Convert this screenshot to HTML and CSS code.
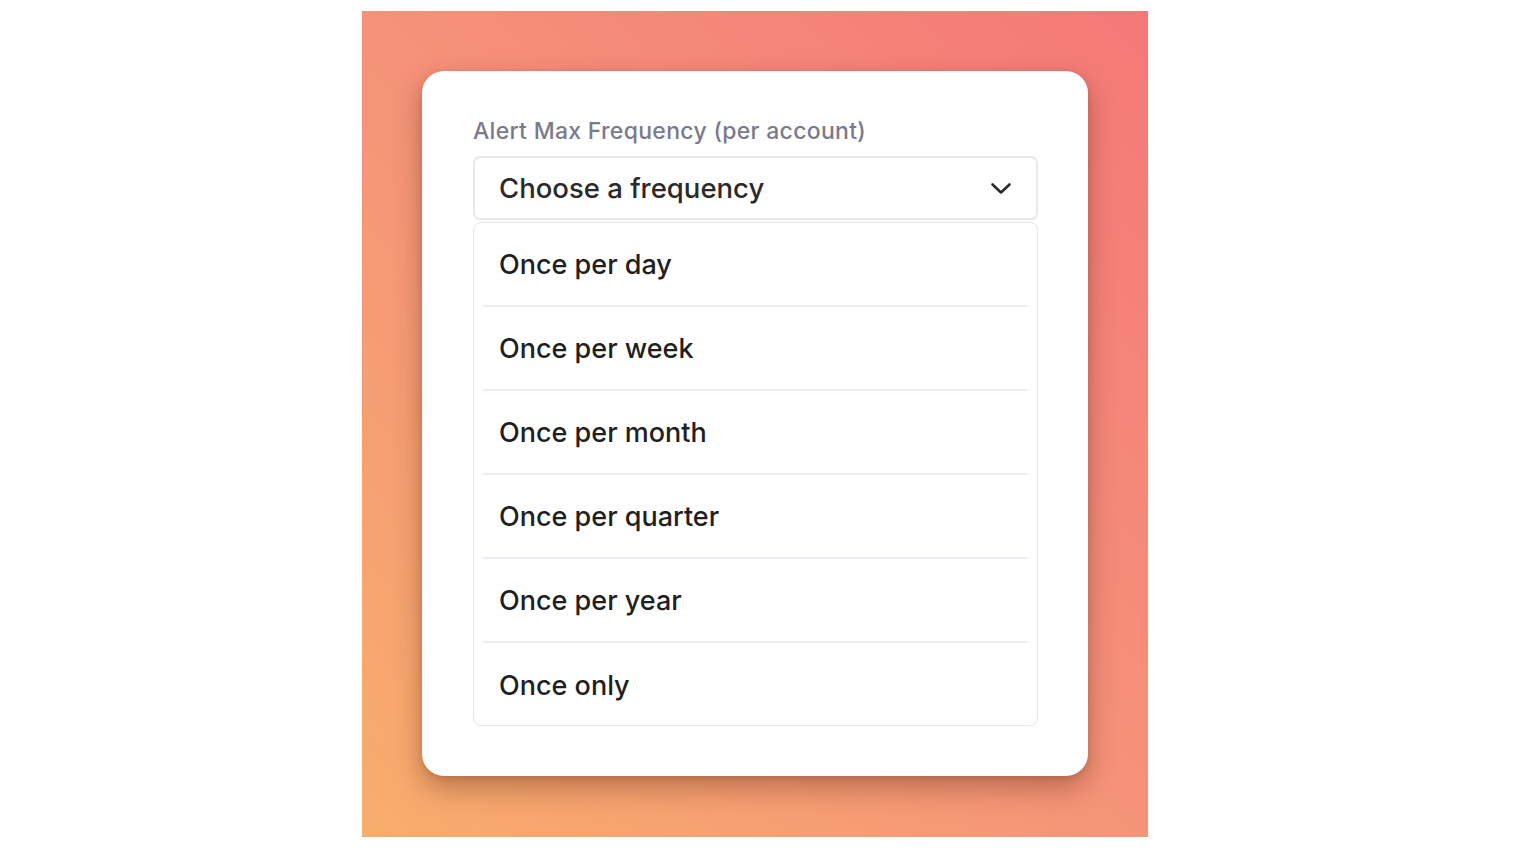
FILE: index.html
```html
<!DOCTYPE html>
<html lang="en">
<head>
<meta charset="utf-8">
<title>Alert Max Frequency</title>
<link rel="stylesheet" href="styles.css">
</head>
<body>
<div class="stage">
  <div class="panel">
    <div class="card">
      <label class="label">Alert Max Frequency (per account)</label>
      <div class="select">
        <span class="select-text">Choose a frequency</span>
        <svg class="chevron" width="22" height="14" viewBox="0 0 22 14"><path d="M2.5 2.5 L11 10.5 L19.5 2.5" fill="none" stroke="#2b2b2b" stroke-width="2.6" stroke-linecap="round" stroke-linejoin="round"/></svg>
      </div>
      <ul class="menu">
        <li class="item">Once per day</li>
        <li class="item">Once per week</li>
        <li class="item">Once per month</li>
        <li class="item">Once per quarter</li>
        <li class="item">Once per year</li>
        <li class="item">Once only</li>
      </ul>
    </div>
  </div>
</div>
</body>
</html>
```
FILE: styles.css
```css
html, body {
  margin: 0;
  padding: 0;
  background: #ffffff;
}
body {
  font-family: Inter, "Open Sans", "Liberation Sans", sans-serif;
}
.stage {
  padding: 11px 0 0 362px;
}
.panel {
  width: 786px;
  height: 826px;
  box-sizing: border-box;
  padding: 60px;
  background: linear-gradient(225deg, #f57878 0%, #f5907a 45%, #f8ad6c 100%);
}
.card {
  width: 666px;
  height: 705px;
  box-sizing: border-box;
  padding: 46px 50px 50px 51px;
  background: #ffffff;
  border-radius: 22px;
  box-shadow: 0 12px 28px rgba(90, 40, 20, 0.38), 0 2px 6px rgba(90, 40, 20, 0.15);
  display: flex;
  flex-direction: column;
}
.label {
  display: block;
  font-size: 23px;
  font-weight: 500;
  color: #7b7a8c;
  line-height: 28px;
  margin-bottom: 11px;
  letter-spacing: 0.3px;
}
.select {
  height: 64px;
  box-sizing: border-box;
  border: 2px solid #e8e8e8;
  border-radius: 7px;
  display: flex;
  align-items: center;
  justify-content: space-between;
  padding: 0 24px 0 24px;
}
.select-text {
  font-size: 27.5px;
  font-weight: 500;
  color: #2a2a2a;
  letter-spacing: 0;
}
.chevron {
  display: block;
  margin-top: 2px;
}
.menu {
  list-style: none;
  margin: 2px 0 0 0;
  padding: 0 9px;
  border: 1px solid #e6e6e6;
  border-radius: 8px;
  box-sizing: border-box;
  height: 504px;
}
.item {
  height: 84px;
  box-sizing: border-box;
  display: flex;
  align-items: center;
  padding: 0 0 0 16px;
  font-size: 27px;
  font-weight: 500;
  color: #1f1f1f;
  border-bottom: 2px solid #ececfb;
  letter-spacing: 0;
}
.item:last-child {
  border-bottom: none;
}
```
